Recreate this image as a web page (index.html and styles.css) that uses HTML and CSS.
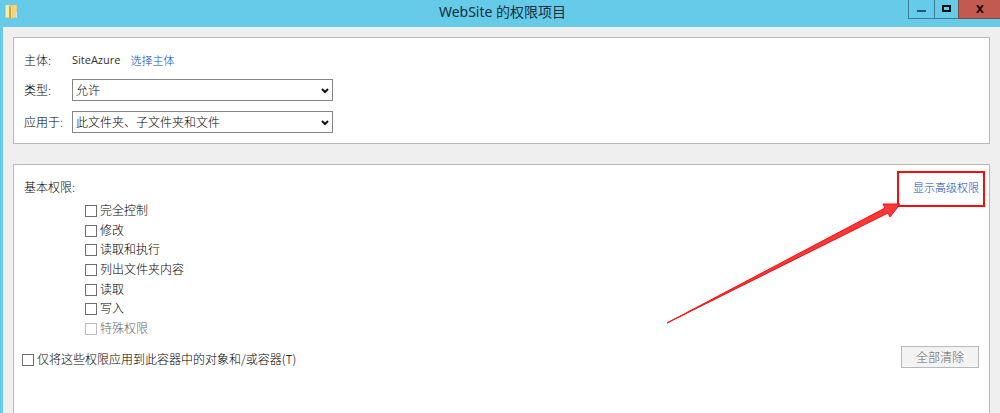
FILE: index.html
```html
<!DOCTYPE html>
<html lang="zh-CN">

<head>
    <title>WebSite 的权限项目</title>
    <meta charset="UTF-8">
    <link rel="stylesheet" href="styles.css">
</head>

<body>
    <div class="window">
        <header class="titlebar">
            <svg class="folder" width="14" height="17" viewBox="0 0 14 17">
                <path d="M0 1h12v13H0z" fill="#e6cb70"/>
                <path d="M1 1h3v12H1z" fill="#f9ebb0"/>
                <path d="M4 2l2 1v12l-2-1z" fill="#c9a545"/>
                <path d="M6 3l1-1v12l-1 1z" fill="#f6e49a"/>
                <path d="M8 1h3v12H8z" fill="#efd784"/>
                <path d="M11 8h1v5h-1z" fill="#d5e6ef"/>
            </svg>
            <h1>WebSite 的权限项目</h1>
            <div class="window-buttons">
                <button type="button" class="minimize" aria-label="最小化">
                    <svg width="10" height="10" viewBox="0 0 10 10"><path d="M0 6h9v2H0z" fill="#28566a"/></svg>
                </button>
                <button type="button" class="maximize" aria-label="最大化">
                    <svg width="10" height="8" viewBox="0 0 10 8"><path d="M1 1h7v5H1z" fill="none" stroke="#111" stroke-width="2"/></svg>
                </button>
                <button type="button" class="close" aria-label="关闭">
                    <svg width="8" height="8" viewBox="0 0 8 8"><path d="M1 0l6 8M7 0L1 8" stroke="#1c0c0c" stroke-width="2"/></svg>
                </button>
            </div>
        </header>

        <main>
            <section class="panel principal">
                <div class="row first">
                    <span class="name">主体:</span>
                    <span class="account">SiteAzure</span>
                    <a href="#">选择主体</a>
                </div>
                <div class="row">
                    <label class="name" for="type">类型:</label>
                    <div class="select">
                        <select id="type">
                            <option>允许</option>
                            <option>拒绝</option>
                        </select>
                        <svg width="8" height="6" viewBox="0 0 8 6"><path d="M1 1l3 3 3-3" fill="none" stroke="#111" stroke-width="2"/></svg>
                    </div>
                </div>
                <div class="row">
                    <label class="name" for="scope">应用于:</label>
                    <div class="select">
                        <select id="scope">
                            <option>此文件夹、子文件夹和文件</option>
                            <option>只有该文件夹</option>
                        </select>
                        <svg width="8" height="6" viewBox="0 0 8 6"><path d="M1 1l3 3 3-3" fill="none" stroke="#111" stroke-width="2"/></svg>
                    </div>
                </div>
            </section>

            <section class="panel permissions">
                <div class="heading">
                    <h2>基本权限:</h2>
                    <a class="advanced" href="#">显示高级权限</a>
                </div>
                <div class="options">
                    <label><input type="checkbox"> 完全控制</label>
                    <label><input type="checkbox"> 修改</label>
                    <label><input type="checkbox"> 读取和执行</label>
                    <label><input type="checkbox"> 列出文件夹内容</label>
                    <label><input type="checkbox"> 读取</label>
                    <label><input type="checkbox"> 写入</label>
                    <label class="disabled"><input type="checkbox" disabled> 特殊权限</label>
                </div>
                <div class="bottom">
                    <label><input type="checkbox"> 仅将这些权限应用到此容器中的对象和/或容器(T)</label>
                    <button type="button" class="clear" disabled>全部清除</button>
                </div>
                <svg class="marker" width="320" height="156" viewBox="0 0 320 156">
                    <path d="M232 2h86v34h-86z" fill="none" stroke="#f80c0c" stroke-width="2"/>
                    <path d="M1 153L219 38l-2-4 17 0-10 13-2-4z" fill="#fb3838" stroke="#f80c0c" stroke-width="1"/>
                </svg>
            </section>
        </main>
    </div>
</body>

</html>
```

FILE: styles.css
```css
* {
    box-sizing: border-box;
}

body {
    margin: 0;
    font-family: "Noto Sans CJK SC", sans-serif;
    font-size: 12px;
    font-weight: 300;
    line-height: 18px;
    color: #000;
}

.window {
    display: flex;
    flex-direction: column;
    min-height: 100vh;
    background-color: #66cae9;
}

.titlebar {
    display: grid;
    grid-template-columns: 1fr auto 1fr;
    height: 27px;
    padding-left: 5px;
}

.folder {
    margin-top: 4px;
}

h1 {
    margin: 0;
    font-family: "Noto Sans", "Noto Sans CJK SC", sans-serif;
    font-size: 14px;
    font-weight: normal;
    line-height: 24px;
    color: #12303c;
}

.window-buttons {
    display: flex;
    justify-content: flex-end;
    align-items: flex-start;
}

.window-buttons button {
    display: flex;
    align-items: center;
    justify-content: center;
    width: 26px;
    height: 19px;
    padding: 0;
    border: 1px solid #3a7d94;
    border-top: none;
    border-right: none;
    background-color: #66cae9;
}

.window-buttons .maximize {
    width: 24px;
}

.window-buttons .close {
    width: 42px;
    border-color: #7d4a48;
    background-color: #c35a50;
}

main {
    flex: 1;
    display: flex;
    flex-direction: column;
    gap: 20px;
    margin-left: 3px;
    padding: 10px 10px 0;
    background-color: #efefef;
}

.panel {
    border: 1px solid #b8b8b8;
    background-color: #fff;
}

.principal {
    display: flex;
    flex-direction: column;
    gap: 10px;
    padding: 9px 10px 10px;
}

.row {
    display: flex;
    align-items: center;
    height: 22px;
}

.first {
    align-items: flex-end;
}

.name {
    width: 48px;
    white-space: nowrap;
}

.account {
    margin-right: 10px;
    font-family: "Open Sans", sans-serif;
    font-size: 11px;
    font-weight: normal;
    color: #333;
}

a {
    font-size: 11px;
    color: #0a48c4;
    text-decoration: none;
}

.select {
    position: relative;
    width: 261px;
}

select {
    display: block;
    appearance: none;
    width: 100%;
    height: 22px;
    padding: 0 3px;
    border: 1px solid #868686;
    border-radius: 0;
    background-color: #fff;
    font: inherit;
    color: inherit;
}

.select svg {
    position: absolute;
    top: 9px;
    right: 4px;
    pointer-events: none;
}

.permissions {
    position: relative;
    flex: 1;
    padding: 12px 10px;
    border-bottom: none;
}

.heading {
    display: flex;
    justify-content: space-between;
    align-items: center;
    height: 20px;
}

h2 {
    margin: 0;
    font-size: 12px;
    font-weight: 300;
}

.options {
    display: grid;
    justify-items: start;
    min-height: 138px;
    margin: 3px 0 0 61px;
}

.options label,
.bottom label {
    display: flex;
    align-items: center;
    gap: 3px;
}

input[type="checkbox"] {
    appearance: none;
    width: 12px;
    height: 12px;
    margin: 2px 0 0;
    border: 1px solid #6e6e6e;
    background-color: #fff;
}

input[type="checkbox"]:checked {
    background-color: #2a62cc;
}

input[type="checkbox"]:disabled {
    border-color: #bcbcbc;
}

.disabled {
    color: #666;
}

.bottom {
    display: flex;
    justify-content: space-between;
    align-items: flex-start;
    margin-top: 8px;
}

.bottom label {
    margin: 4px 0 0 -2px;
}

.clear {
    width: 78px;
    height: 22px;
    padding: 0;
    border: 1px solid #b4b9be;
    background-color: #f3f3f3;
    font: inherit;
    color: #666;
}

.marker {
    position: absolute;
    top: 5px;
    right: 3px;
    pointer-events: none;
}
```
